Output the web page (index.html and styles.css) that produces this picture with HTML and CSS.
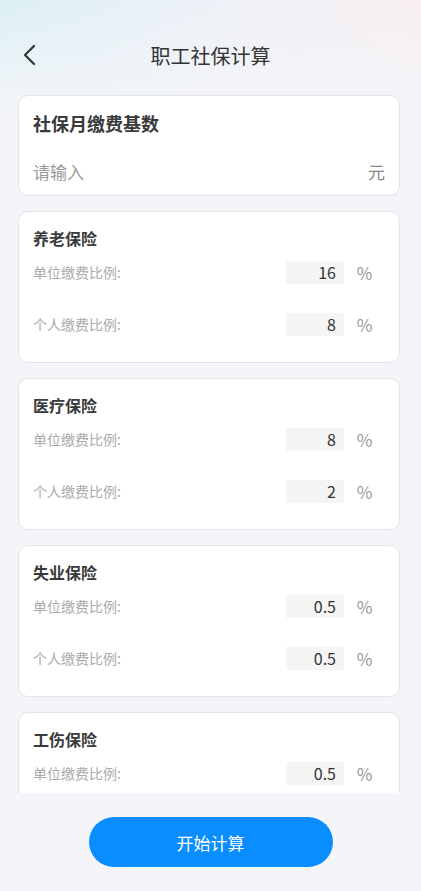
FILE: index.html
```html
<!DOCTYPE html>
<html lang="zh-CN">
<head>
  <meta charset="UTF-8" />
  <meta name="viewport" content="width=device-width, initial-scale=1.0"/>
  <title>职工社保计算</title>
  <link rel="stylesheet" href="styles.css">
</head>
<body>
  <div class="topbar">
    <a href="#" class="btn-voltar" aria-label="返回">
      <svg width="16" height="24" viewBox="0 0 16 24"><path d="M12 3 L3 12 L12 21" fill="none" stroke="#333" stroke-width="2.2" stroke-linecap="round" stroke-linejoin="round"/></svg>
    </a>
    <h1>职工社保计算</h1>
  </div>

  <div class="conteudo">
    <div class="card base">
      <h2>社保月缴费基数</h2>
      <div class="linha-base">
        <input type="text" placeholder="请输入" />
        <span class="unidade-base">元</span>
      </div>
    </div>

    <div class="card">
      <h3>养老保险</h3>
      <div class="linha"><span>单位缴费比例:</span><input type="text" value="16" /><span class="unidade">%</span></div>
      <div class="linha"><span>个人缴费比例:</span><input type="text" value="8" /><span class="unidade">%</span></div>
    </div>

    <div class="card">
      <h3>医疗保险</h3>
      <div class="linha"><span>单位缴费比例:</span><input type="text" value="8" /><span class="unidade">%</span></div>
      <div class="linha"><span>个人缴费比例:</span><input type="text" value="2" /><span class="unidade">%</span></div>
    </div>

    <div class="card">
      <h3>失业保险</h3>
      <div class="linha"><span>单位缴费比例:</span><input type="text" value="0.5" /><span class="unidade">%</span></div>
      <div class="linha"><span>个人缴费比例:</span><input type="text" value="0.5" /><span class="unidade">%</span></div>
    </div>

    <div class="card">
      <h3>工伤保险</h3>
      <div class="linha"><span>单位缴费比例:</span><input type="text" value="0.5" /><span class="unidade">%</span></div>
    </div>
  </div>

  <div class="acoes">
    <button type="button">开始计算</button>
  </div>
</body>
</html>
```

FILE: styles.css
```css
body {
  margin: 0;
  padding: 0;
  font-family: "Noto Sans CJK SC", "Noto Sans", sans-serif;
  background:
    linear-gradient(to bottom, rgba(244, 245, 249, 0) 0, #f4f5f9 115px) no-repeat,
    linear-gradient(to right, #dcf0f5, #edf1f7 50%, #f8eff2) no-repeat;
  background-size: 100% 130px, 100% 130px;
  background-color: #f4f5f9;
  height: 891px;
  display: flex;
  flex-direction: column;
  overflow: hidden;
}

.topbar {
  height: 50px;
  padding-top: 30px;
  margin-bottom: 10px;
  display: flex;
  align-items: center;
  justify-content: center;
  position: relative;
}

.topbar h1 {
  margin: 0;
  font-size: 20px;
  font-weight: 400;
  color: #333;
}

.btn-voltar {
  position: absolute;
  left: 22px;
  top: 43px;
  display: flex;
}

.conteudo {
  height: 698px;
  overflow: hidden;
  padding: 5px 21px 0 18px;
  display: flex;
  flex-direction: column;
  gap: 15px;
}

.card {
  flex-shrink: 0;
  background: #fff;
  border: 1px solid #e3e4e7;
  border-radius: 10px;
  padding: 16px 14px 14px;
}

.card.base {
  padding: 15px 14px 0;
}

.card h2 {
  margin: 0;
  font-size: 18px;
  line-height: 24px;
  font-weight: 700;
  color: #3a3a3a;
}

.linha-base {
  margin-top: 12px;
  height: 48px;
  display: flex;
  align-items: center;
}

.linha-base input {
  flex: 1;
  border: none;
  outline: none;
  padding: 0;
  font-family: inherit;
  font-size: 17px;
  color: #333;
}

.linha-base input::placeholder {
  color: #999;
}

.unidade-base {
  font-size: 17px;
  color: #888;
}

.card h3 {
  margin: 0;
  font-size: 16px;
  line-height: 20px;
  font-weight: 700;
  color: #3a3a3a;
}

.linha {
  height: 48px;
  display: flex;
  align-items: center;
  font-size: 14px;
  color: #aaa;
}

.linha + .linha {
  margin-top: 4px;
}

.linha span:first-child {
  flex: 1;
}

.linha input {
  width: 58px;
  height: 23px;
  box-sizing: border-box;
  border: none;
  outline: none;
  background: #f5f5f5;
  padding: 0 8px 0 0;
  text-align: right;
  font-family: inherit;
  font-size: 16px;
  color: #333;
}

.unidade {
  width: 41px;
  text-align: center;
  font-size: 17px;
  color: #999;
}

.acoes {
  flex: 1;
  display: flex;
  justify-content: center;
  padding-top: 24px;
}

button {
  width: 244px;
  height: 50px;
  border: none;
  border-radius: 25px;
  background-color: #0a8dff;
  color: #fff;
  font-family: inherit;
  font-size: 17px;
  cursor: pointer;
}
```
